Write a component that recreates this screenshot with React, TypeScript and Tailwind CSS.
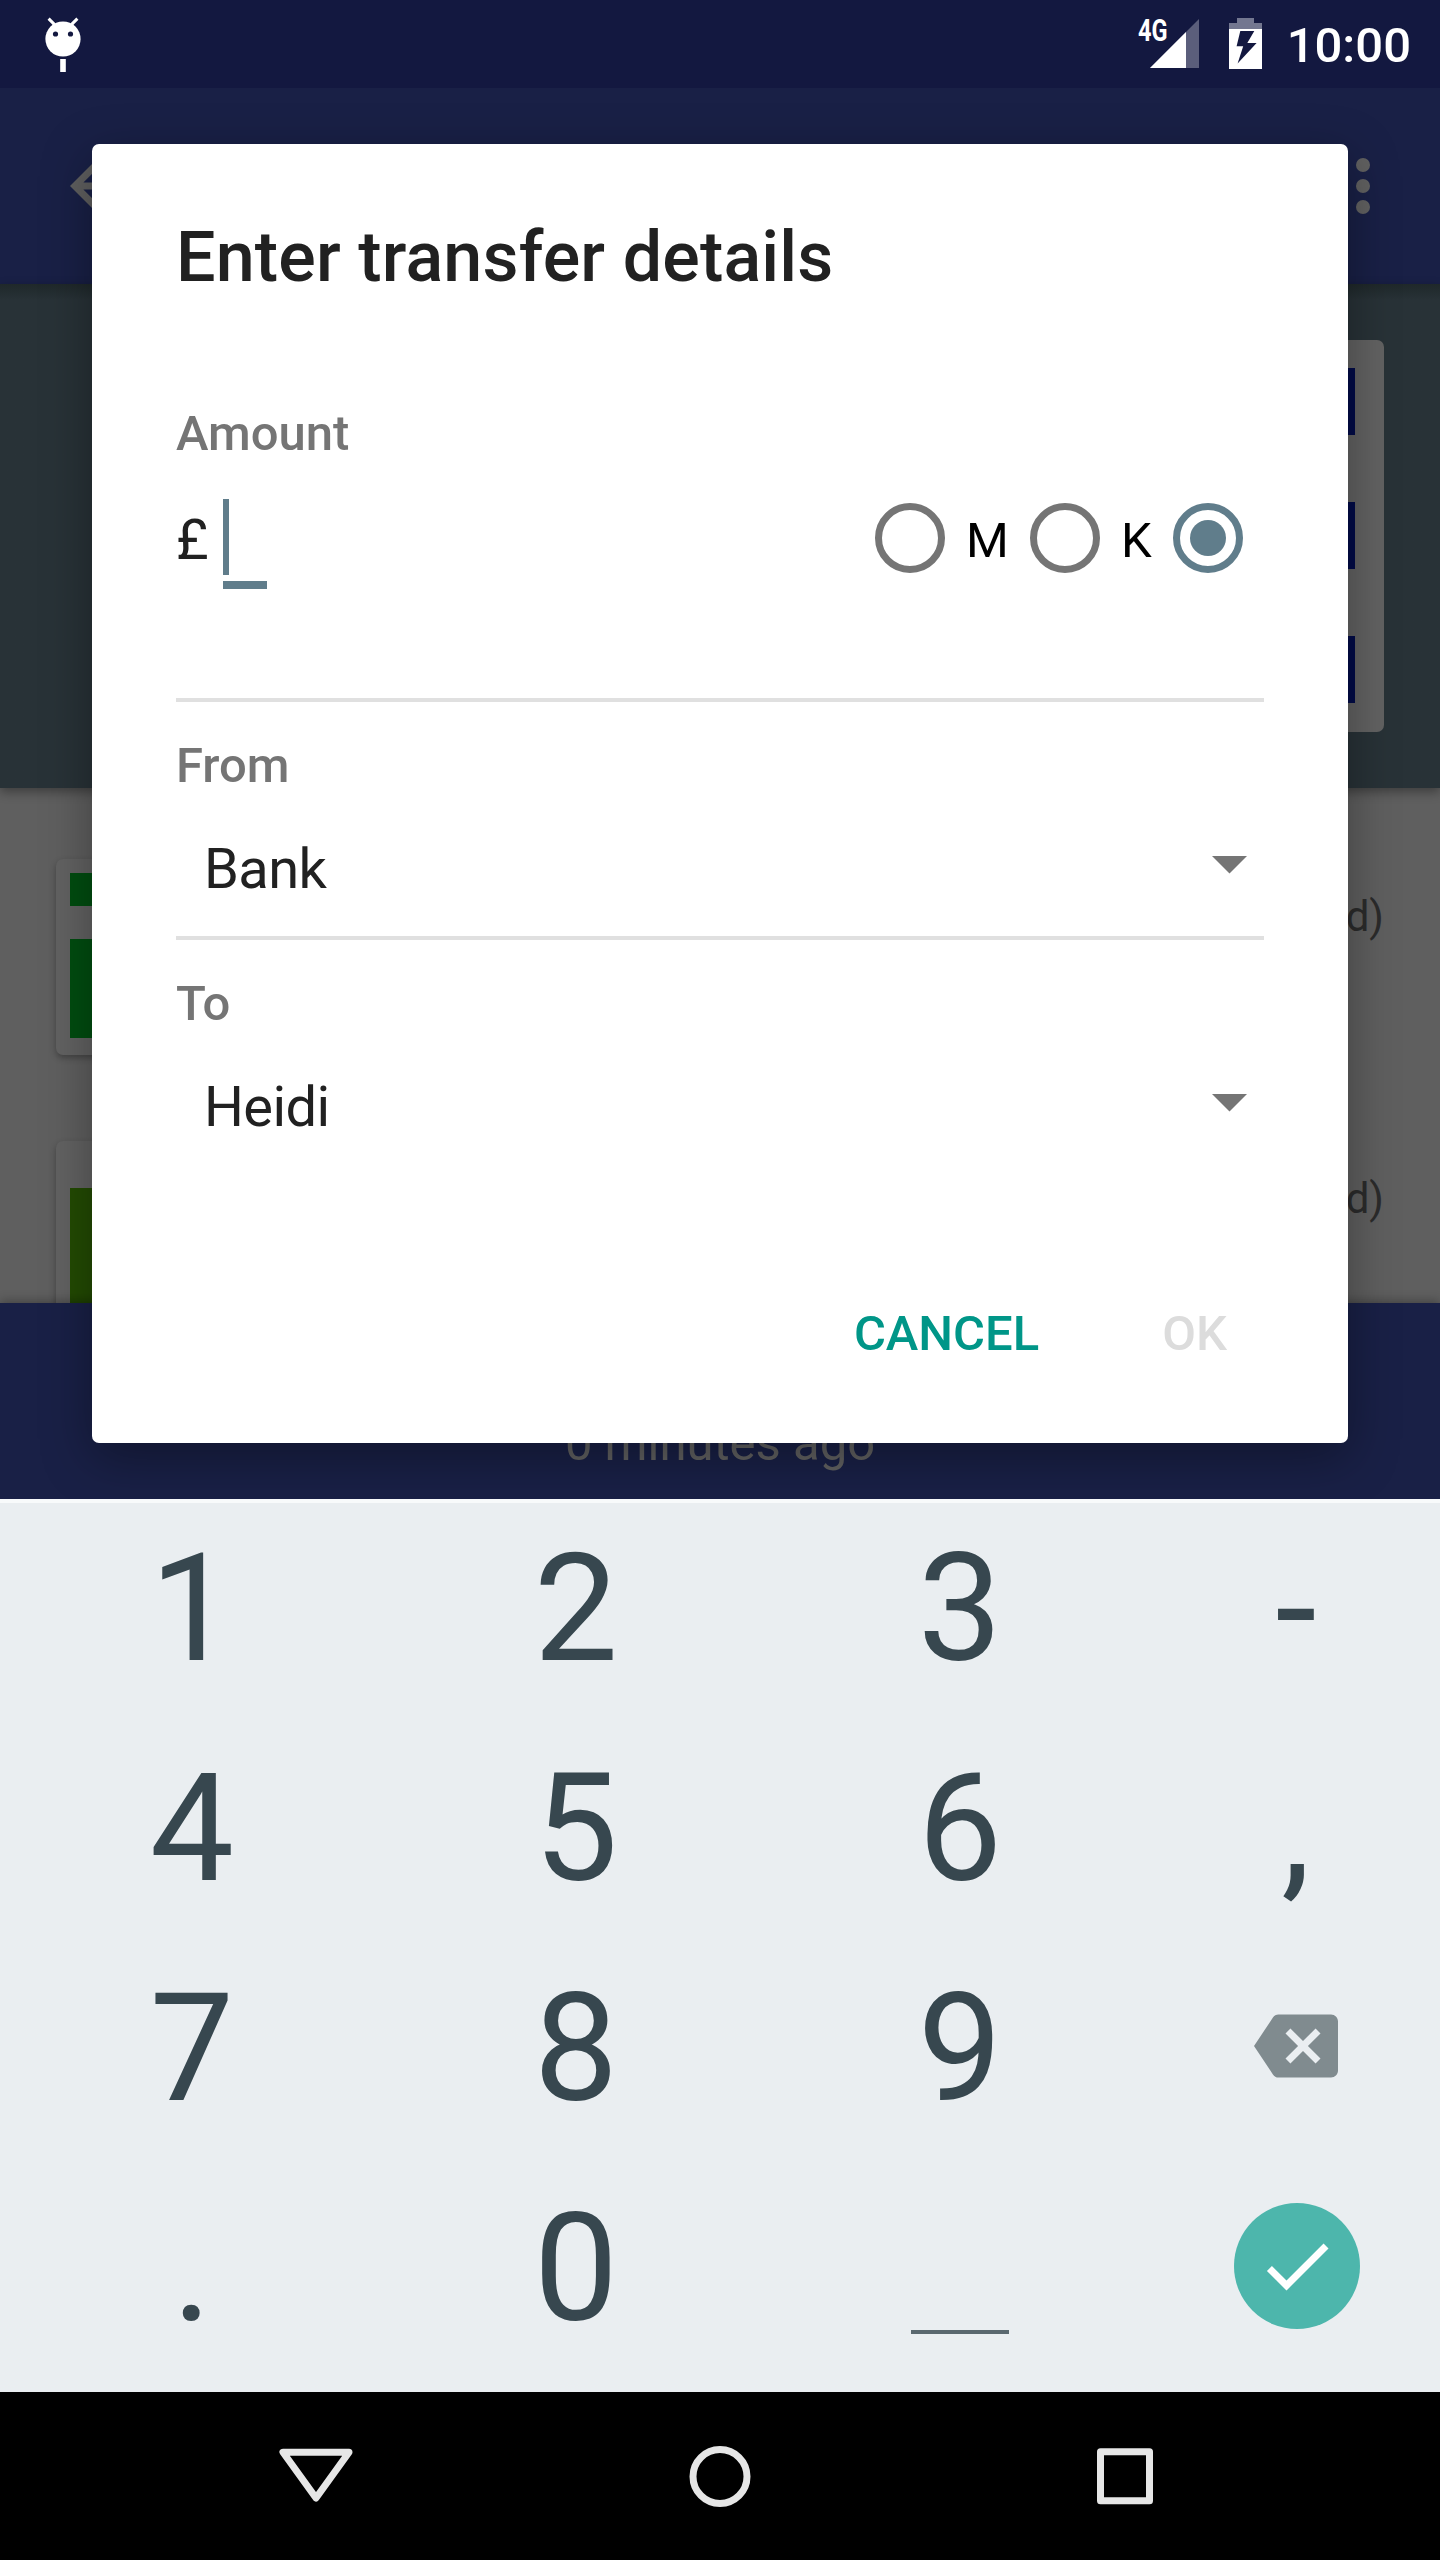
import type { ReactNode } from 'react';

function StatusBar() {
  return (
    <header className="h-[88px] bg-[#131840] flex items-start justify-between">
      <svg className="ml-[42px] mt-3" width="42" height="64" viewBox="42 12 42 64">
        <circle cx="63" cy="39" r="17.6" fill="#fff" />
        <path d="M48.6 18.6l6 6M77.4 18.6l-6 6" stroke="#fff" strokeWidth="3" />
        <circle cx="55.5" cy="34" r="2.6" fill="#131840" />
        <circle cx="70.5" cy="34" r="2.6" fill="#131840" />
        <rect x="60.2" y="59" width="5.6" height="13" fill="#fff" />
      </svg>
      <div className="flex items-start text-white">
        <span className="mt-[14px] w-[30px] h-[34px] leading-[34px] text-[31px] font-bold origin-left scale-x-[0.76] whitespace-nowrap">4G</span>
        <svg className="-ml-[19px] mt-[18px]" width="50" height="50" viewBox="1149 18 50 50">
          <path d="M1150 68L1199 19V68z" fill="#5b5e7b" />
          <path d="M1150 68L1186 32V68z" fill="#fff" />
        </svg>
        <svg className="ml-[30px] mt-[18px]" width="33" height="51" viewBox="0 0 33 51">
          <path d="M0 11V5H8V0H25V5H33V11z" fill="#737790" />
          <rect y="11" width="33" height="40" fill="#fff" />
          <path d="M11.3 13H25.3L18.3 25H27.6L8.6 45.5L14.2 28.3H7.6z" fill="#131840" />
        </svg>
        <span className="ml-[25px] mr-[29px] mt-[17px] leading-[58px] text-[49px] font-medium">10:00</span>
      </div>
    </header>
  );
}

function AppBar() {
  return (
    <div className="h-[196px] bg-[#192046] flex items-center justify-between">
      <svg className="ml-14" width="84" height="84" viewBox="0 0 24 24" fill="#5f5f5f">
        <path d="M20 11H7.83l5.59-5.59L12 4l-8 8 8 8 1.41-1.41L7.83 13H20v-2z" />
      </svg>
      <div className="mr-[70px] flex flex-col gap-[7px]">
        <i className="size-[14px] rounded-full bg-[#616161]" />
        <i className="size-[14px] rounded-full bg-[#616161]" />
        <i className="size-[14px] rounded-full bg-[#616161]" />
      </div>
    </div>
  );
}

function BankPanel() {
  return (
    <div className="relative h-[504px] pt-14 pr-14 flex justify-end items-start bg-linear-to-b from-[#1f282a] from-0% via-[#283237] via-[16px] to-[#283237] shadow-[0_4px_10px_rgba(0,0,0,0.35)]">
      <div className="w-[200px] h-[392px] rounded-[7px] bg-[#626262] pt-7 pr-[29px] flex flex-col items-end gap-[67px]">
        <i className="w-16 h-[67px] bg-[#020b48]" />
        <i className="w-16 h-[67px] bg-[#020b48]" />
        <i className="w-16 h-[67px] bg-[#020b48]" />
      </div>
    </div>
  );
}

function PlayerRow({ children }: { children: ReactNode }) {
  return (
    <div className="h-[282px] shrink-0 pl-14 pr-14 flex justify-between">
      <div className="w-[300px] h-[196px] rounded-[7px] bg-[#626262] pl-[14px] shadow-[0_3px_6px_rgba(0,0,0,0.3)]">{children}</div>
      <span className="mt-[33px] leading-[50px] text-[42px] text-[#2b2b2b]">(selected)</span>
    </div>
  );
}

function Background() {
  return (
    <div className="h-[1411px] overflow-hidden flex flex-col">
      <AppBar />
      <BankPanel />
      <div className="h-[515px] pt-[71px] bg-[#5f5f5f] overflow-hidden flex flex-col">
        <PlayerRow>
          <div className="pt-[14px] flex flex-col gap-[33px]">
            <i className="h-[33px] bg-[#004d10]" />
            <i className="h-[99px] bg-[#004d10]" />
          </div>
        </PlayerRow>
        <PlayerRow>
          <div className="pt-[47px]">
            <div className="h-[149px] bg-[#234b03]" />
          </div>
        </PlayerRow>
      </div>
      <div className="relative h-[196px] pt-[112px] bg-[#192046] text-center leading-[58px] text-[49px] text-[#616161] shadow-[0_-2px_10px_rgba(0,0,0,0.3)]">
        0 minutes ago
      </div>
    </div>
  );
}

function Label({ children }: { children: ReactNode }) {
  return <div className="leading-[58px] text-[49px] font-medium text-[#757575]">{children}</div>;
}

function Spinner({ label, value }: { label: string; value: string }) {
  return (
    <div className="border-t-4 border-[#e0e0e0] pt-[35px] pb-[34px]">
      <Label>{label}</Label>
      <div className="mt-[41px] h-[66px] pl-7 pr-[17px] flex justify-between">
        <span className="leading-[66px] text-[56px] tracking-[-0.6px] text-[#212121]">{value}</span>
        <svg className="mt-5" width="35" height="18" viewBox="0 0 35 18">
          <path d="M0 0H35L17.5 17.5z" fill="#757575" />
        </svg>
      </div>
    </div>
  );
}

function Radio({ checked }: { checked?: boolean }) {
  return checked ? (
    <span className="size-[70px] rounded-full border-[7px] border-[#607d8b] flex items-center justify-center">
      <i className="size-9 rounded-full bg-[#607d8b]" />
    </span>
  ) : (
    <span className="size-[70px] rounded-full border-[7px] border-[#757575]" />
  );
}

function TransferDialog() {
  return (
    <div className="absolute left-[92px] top-[144px] w-[1256px] h-[1299px] rounded-[7px] bg-white px-[84px] pt-[72px] shadow-[0_14px_50px_rgba(0,0,0,0.35)]">
      <h1 className="leading-[82px] text-[70px] tracking-[0.15px] font-medium text-[#212121]">Enter transfer details</h1>
      <div className="mt-[107px]">
        <Label>Amount</Label>
      </div>
      <div className="mt-[22px] mb-[107px] h-[106px] flex items-center justify-between">
        <div className="flex items-start h-full">
          <span className="w-[47px] mt-[22px] leading-[66px] text-[56px] text-[#212121]">£</span>
          <div className="mt-[14px] w-11">
            <div className="w-[6px] h-[76px] bg-[#607d8b]" />
            <div className="mt-[6px] h-2 bg-[#607d8b]" />
          </div>
        </div>
        <div className="flex items-center mr-[21px] leading-[58px] text-[49px] text-black">
          <Radio />
          <span className="w-[85px] pl-[21px] pt-[6px]">M</span>
          <Radio />
          <span className="w-[73px] pl-[21px] pt-[6px]">K</span>
          <Radio checked />
        </div>
      </div>
      <Spinner label="From" value="Bank" />
      <Spinner label="To" value="Heidi" />
      <div className="mt-[131px] flex justify-end leading-[58px] text-[49px] font-medium">
        <button className="mr-[123px] text-[#009688]">CANCEL</button>
        <button className="mr-[37px] text-[#dcdcdc]">OK</button>
      </div>
    </div>
  );
}

function Key({ children }: { children?: ReactNode }) {
  return <div className="flex items-center justify-center">{children}</div>;
}

function Keypad() {
  return (
    <div className="h-[893px] bg-[#eaeef1] shadow-[inset_0_4px_0_#f8fafb]">
      <div className="grid grid-cols-[384px_384px_384px_288px] auto-rows-[220px] text-[150px] leading-[220px] text-[#37474f]">
        <Key>1</Key>
        <Key>2</Key>
        <Key>3</Key>
        <Key>-</Key>
        <Key>4</Key>
        <Key>5</Key>
        <Key>6</Key>
        <Key>,</Key>
        <Key>7</Key>
        <Key>8</Key>
        <Key>9</Key>
        <Key>
          <svg className="-mt-[6px]" width="84" height="84" viewBox="0 0 24 24" fill="#808b8f">
            <path d="M22 3H7c-.69 0-1.23.35-1.59.88L0 12l5.41 8.11c.36.53.9.89 1.59.89h15c1.1 0 2-.9 2-2V5c0-1.1-.9-2-2-2zm-3 12.59L17.59 17 14 13.41 10.41 17 9 15.59 12.59 12 9 8.41 10.41 7 14 10.59 17.59 7 19 8.41 15.41 12 19 15.59z" />
          </svg>
        </Key>
        <Key>.</Key>
        <Key>0</Key>
        <Key>
          <i className="mt-[125px] w-[98px] h-1 bg-[#5a686f]" />
        </Key>
        <Key>
          <span className="-mt-[6px] ml-px size-[126px] rounded-full bg-[#4db6ac] flex items-center justify-center">
            <svg width="84" height="84" viewBox="0 0 24 24" fill="#fff">
              <path d="M9 16.17L4.83 12l-1.42 1.41L9 19 21 7l-1.41-1.41z" />
            </svg>
          </span>
        </Key>
      </div>
    </div>
  );
}

function NavBar() {
  return (
    <nav className="h-[168px] bg-black px-[274px] flex items-center justify-between">
      <svg width="84" height="84" viewBox="0 0 84 84" fill="none" stroke="#e6e6e6" strokeWidth="7" strokeLinejoin="round">
        <path d="M9 18.2H75L42 64z" />
      </svg>
      <svg width="84" height="84" viewBox="0 0 84 84" fill="none" stroke="#e6e6e6" strokeWidth="7">
        <circle cx="42" cy="42.5" r="27" />
      </svg>
      <svg width="84" height="84" viewBox="0 0 84 84" fill="none" stroke="#e6e6e6" strokeWidth="7" strokeLinejoin="round">
        <rect x="18.5" y="17.7" width="49" height="49" />
      </svg>
    </nav>
  );
}

export default function App() {
  return (
    <div className="relative w-[1440px] h-[2560px] overflow-hidden font-[Roboto,sans-serif]">
      <div className="relative h-[1499px] overflow-hidden">
        <StatusBar />
        <Background />
        <TransferDialog />
      </div>
      <Keypad />
      <NavBar />
    </div>
  );
}
